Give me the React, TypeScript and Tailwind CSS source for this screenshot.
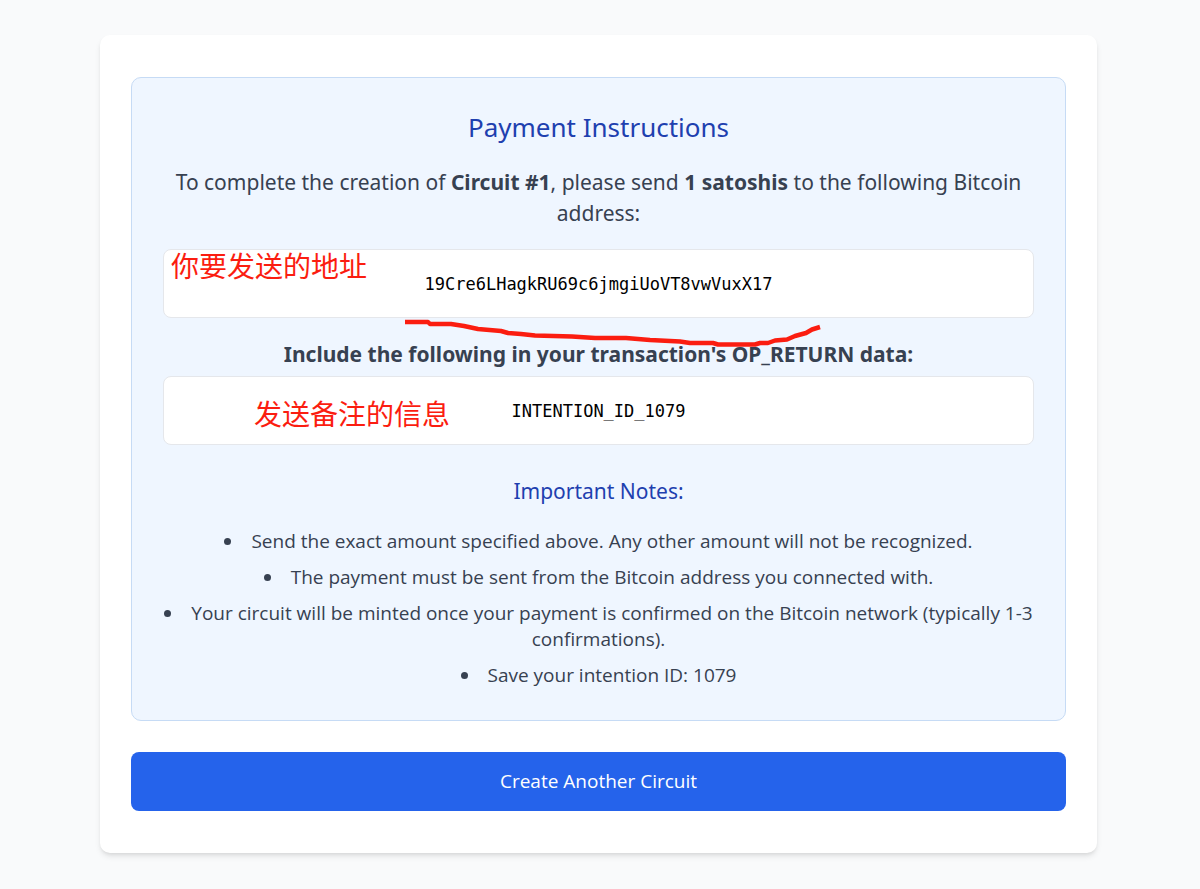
import React from "react";

type CopyFieldProps = {
  value: string;
  children?: React.ReactNode;
};

const notes = [
  "Send the exact amount specified above. Any other amount will not be recognized.",
  "The payment must be sent from the Bitcoin address you connected with.",
  "Your circuit will be minted once your payment is confirmed on the Bitcoin network (typically 1-3 confirmations).",
  "Save your intention ID: 1079",
];

const CopyField = ({ value, children }: CopyFieldProps) => {
  return (
    <div className="relative rounded-lg border border-[#e5e7eb] bg-white px-5 pt-[21px] pb-[19px] leading-[27px]">
      <code className="font-['DejaVu_Sans_Mono',monospace] text-[17px] break-all text-black">
        {value}
      </code>
      {children}
    </div>
  );
};

const App = () => {
  return (
    <main className="min-h-screen bg-[#f9fafb] pt-[35px] pr-[103px] pb-9 pl-[100px] font-['Noto_Sans',sans-serif] text-[#374151]">
      <div className="rounded-[10px] bg-white px-[31px] py-[42px] shadow-md">
        <section className="rounded-[10px] border border-[#c6dbf5] bg-[#eff6ff] px-[31px] pt-[31px] pb-8 text-center">
          <h1 className="mb-[22px] text-[26px] leading-9 text-[#1e40af]">
            Payment Instructions
          </h1>
          <p className="mb-5 text-[21px] leading-[31px]">
            To complete the creation of <strong>Circuit #1</strong>, please send{" "}
            <strong>1 satoshis</strong> to the following Bitcoin address:
          </p>
          <CopyField value="19Cre6LHagkRU69c6jmgiUoVT8vwVuxX17">
            <span className="absolute top-0 left-[7px] font-['Noto_Sans_CJK_SC',sans-serif] text-[28px] leading-[30px] text-[#fb1d10]">
              你要发送的地址
            </span>
            {/* hand-drawn underline below the address */}
            <svg
              className="pointer-events-none absolute top-[66px] left-[238px] z-10"
              width="424"
              height="36"
              viewBox="402 316 424 36"
              fill="none"
              stroke="#fb1d10"
              strokeWidth="4.5"
              strokeLinejoin="round"
            >
              <path d="M405 322H428L430 324H451L464 326L478 329L501 331L508 333L521 334L535 335.5L572 336.5L595 338H626L650 340L680 341.5L690 343H713L718 344.5H755L760 343H768L775 340.5L787 339.5L795 336L806 333L812 329.5L820 327" />
            </svg>
          </CopyField>
          <p className="mt-[21px] mb-[6px] text-[21px] leading-[31px] font-bold">
            Include the following in your transaction's OP_RETURN data:
          </p>
          <CopyField value="INTENTION_ID_1079">
            <span className="absolute top-[21px] left-[90px] font-['Noto_Sans_CJK_SC',sans-serif] text-[28px] leading-[30px] text-[#fb1d10]">
              发送备注的信息
            </span>
          </CopyField>
          <h2 className="mt-[31px] mb-[21px] text-[21px] leading-[31px] text-[#1e40af]">
            Important Notes:
          </h2>
          <ul className="list-inside list-disc space-y-[10px] font-['Open_Sans',sans-serif] text-[19px] leading-[26px]">
            {notes.map((note) => (
              <li key={note}>{note}</li>
            ))}
          </ul>
        </section>
        <button
          type="button"
          className="mt-[31px] w-full rounded-lg bg-[#2563eb] py-4 font-['Open_Sans',sans-serif] text-[19px] leading-[27px] text-white"
        >
          Create Another Circuit
        </button>
      </div>
    </main>
  );
};

export default App;
